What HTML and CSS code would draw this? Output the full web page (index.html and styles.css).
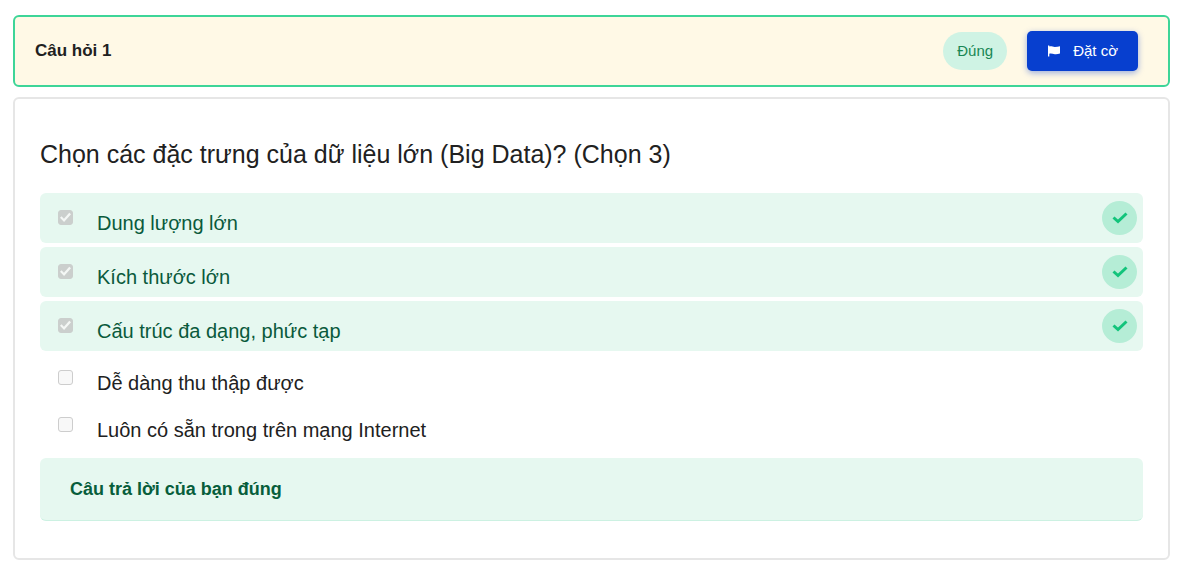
FILE: index.html
```html
<!DOCTYPE html>
<html lang="vi">
<head>
<meta charset="utf-8">
<meta name="viewport" content="width=device-width, initial-scale=1">
<title>Câu hỏi 1</title>
<link rel="stylesheet" href="styles.css">
</head>
<body>
<main class="quiz">
  <header class="quiz-header">
    <h1 class="quiz-number">Câu hỏi 1</h1>
    <span class="badge">Đúng</span>
    <button class="flag-button" type="button">
      <svg class="flag-icon" viewBox="0 0 14 12" aria-hidden="true"><path d="M1 .5h1.300v1C4.200.8 5.700 2 7.800 2c1.900 0 3.600-.5 5.200-.8v7.300c-1.700.500-3.200.9-5.200.7-2-.2-3.500-1-5.500-.5V11.500H1z"/></svg>
      Đặt cờ
    </button>
  </header>
  <section class="question">
    <h2 class="question-title">Chọn các đặc trưng của dữ liệu lớn (Big Data)? (Chọn 3)</h2>
    <ul class="answers">
      <li class="answer correct">
        <input class="check" type="checkbox" id="a1" checked disabled>
        <label class="answer-label" for="a1">Dung lượng lớn</label>
        <span class="mark"><svg class="mark-icon" viewBox="0 0 16 12" aria-hidden="true"><path d="M1.500 5.500 6 9.500 14.500 1.500"/></svg></span>
      </li>
      <li class="answer correct">
        <input class="check" type="checkbox" id="a2" checked disabled>
        <label class="answer-label" for="a2">Kích thước lớn</label>
        <span class="mark"><svg class="mark-icon" viewBox="0 0 16 12" aria-hidden="true"><path d="M1.500 5.500 6 9.500 14.500 1.500"/></svg></span>
      </li>
      <li class="answer correct">
        <input class="check" type="checkbox" id="a3" checked disabled>
        <label class="answer-label" for="a3">Cấu trúc đa dạng, phức tạp</label>
        <span class="mark"><svg class="mark-icon" viewBox="0 0 16 12" aria-hidden="true"><path d="M1.500 5.500 6 9.500 14.500 1.500"/></svg></span>
      </li>
      <li class="answer">
        <input class="check" type="checkbox" id="a4" disabled>
        <label class="answer-label" for="a4">Dễ dàng thu thập được</label>
      </li>
      <li class="answer">
        <input class="check" type="checkbox" id="a5" disabled>
        <label class="answer-label" for="a5">Luôn có sẵn trong trên mạng Internet</label>
      </li>
    </ul>
    <p class="feedback">Câu trả lời của bạn đúng</p>
  </section>
</main>
</body>
</html>
```

FILE: styles.css
```css
* {
  box-sizing: border-box;
}

body {
  margin: 0;
  background: #fff;
  color: #212121;
  font-family: "Liberation Sans", Arial, sans-serif;
}

.quiz {
  display: flex;
  flex-direction: column;
  gap: 10px;
  padding: 15px 9px 10px 13px;
}

.quiz-header {
  display: flex;
  align-items: center;
  gap: 20px;
  padding: 14px 30px 14px 20px;
  border: 2px solid #3dd598;
  border-radius: 6px;
  background: #fff9e6;
}

.quiz-number {
  flex: 1;
  margin: 0;
  font-size: 17px;
  line-height: 24px;
}

.badge {
  padding: 9px 14px;
  border-radius: 19px;
  background: #cff3e4;
  color: #198754;
  font-size: 15px;
  line-height: 20px;
}

.flag-button {
  display: flex;
  align-items: center;
  gap: 12px;
  padding: 10px 20px;
  border: 0;
  border-radius: 5px;
  background: #073fcf;
  box-shadow: 0 2px 6px rgba(7, 63, 207, 0.4);
  color: #fff;
  font-family: inherit;
  font-size: 15px;
  line-height: 20px;
}

.flag-icon {
  width: 14px;
  height: 12px;
  fill: #fff;
}

.question {
  padding: 39px 25px 37px;
  border: 2px solid #e6e6e6;
  border-radius: 6px;
}

.question-title {
  margin: 0 0 23px;
  font-size: 25px;
  font-weight: 400;
  line-height: 32px;
}

.answers {
  display: flex;
  flex-direction: column;
  gap: 4px;
  margin: 0 0 13px;
  padding: 0;
  list-style: none;
}

.answer {
  display: flex;
  align-items: flex-start;
  gap: 24px;
  padding: 15px 6px 3px 18px;
}

.answer.correct {
  padding: 8px 6px 8px 18px;
  border-radius: 6px;
  background: #e6f8f0;
  color: #0a5a3c;
}

.check {
  appearance: none;
  display: grid;
  flex: none;
  place-items: center;
  width: 15px;
  height: 15px;
  margin: 0;
  border: 1px solid #cdcdcd;
  border-radius: 3px;
  background: #f8f8f8;
}

.correct .check {
  margin-top: 9px;
}

.check:checked {
  border-color: #cbcfcd;
  background: #cbcfcd;
}

.check:checked::after {
  content: "";
  width: 11px;
  height: 11px;
  background: #f4f7f5;
  clip-path: polygon(0 52%, 14% 38%, 36% 62%, 84% 6%, 100% 20%, 37% 92%);
}

.answer-label {
  flex: 1;
  padding-top: 1px;
  font-size: 20px;
  line-height: 24px;
}

.correct .answer-label {
  padding-top: 10px;
}

.mark {
  display: grid;
  place-items: center;
  width: 35px;
  height: 34px;
  border-radius: 50%;
  background: #b5edd6;
}

.mark-icon {
  width: 16px;
  height: 12px;
  fill: none;
  stroke: #12c47b;
  stroke-width: 3;
}

.feedback {
  margin: 0;
  padding: 19px 30px;
  border-bottom: 1px solid #ccf1e2;
  border-radius: 6px;
  background: #e6f8f0;
  color: #075e3b;
  font-size: 18px;
  font-weight: 700;
  line-height: 24px;
}
```
